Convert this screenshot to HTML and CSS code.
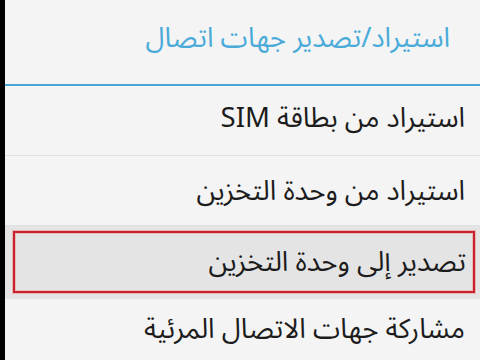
FILE: index.html
```html
<!DOCTYPE html>
<html lang="ar" dir="rtl">
<head>
<meta charset="utf-8">
<link rel="stylesheet" href="styles.css">
</head>
<body>
<div class="dialog">
  <div class="title">استيراد/تصدير جهات اتصال</div>
  <div class="title-rule"></div>
  <ul class="list">
    <li class="item first">استيراد من بطاقة SIM</li>
    <li class="item">استيراد من وحدة التخزين</li>
    <li class="item selected"><span class="frame">تصدير إلى وحدة التخزين</span></li>
    <li class="item last">مشاركة جهات الاتصال المرئية</li>
  </ul>
</div>
</body>
</html>
```
FILE: styles.css
```css
html, body {
  margin: 0;
  padding: 0;
  background: #000;
  height: 360px;
  overflow: hidden;
}
.dialog {
  margin-left: 2px;
  width: 475px;
  height: 360px;
  background: #f4f4f4;
  font-family: "Noto Sans Arabic", "DejaVu Sans", "Noto Sans", sans-serif;
  overflow: hidden;
}
.title {
  height: 84px;
  box-sizing: border-box;
  display: flex;
  align-items: center;
  padding: 0 30px 8px 0;
  color: #4aabd9;
  font-size: 27.5px;
}
.title-rule {
  height: 2px;
  background: #46a6d6;
}
.list {
  list-style: none;
  margin: 0;
  padding: 0;
}
.item {
  height: 70px;
  box-sizing: border-box;
  border-bottom: 1px solid #e1e1e1;
  display: flex;
  align-items: center;
  padding-right: 15px;
  color: #1c1c1c;
  font-size: 27.5px;
}
.item.first {
  padding-bottom: 6px;
}
.item.selected {
  height: 73px;
  background: #e4e4e4;
  border-bottom: none;
  padding: 5px 5px 6px 8px;
}
.item.last {
  height: 59px;
  border-bottom: none;
}
.frame {
  flex: 1;
  align-self: stretch;
  display: flex;
  align-items: center;
  padding-right: 7px;
  border: 2px solid #c8232c;
  box-shadow: 0 0 0 1px rgba(235, 140, 140, 0.55), inset 0 0 0 1px rgba(235, 140, 140, 0.45);
}
```
